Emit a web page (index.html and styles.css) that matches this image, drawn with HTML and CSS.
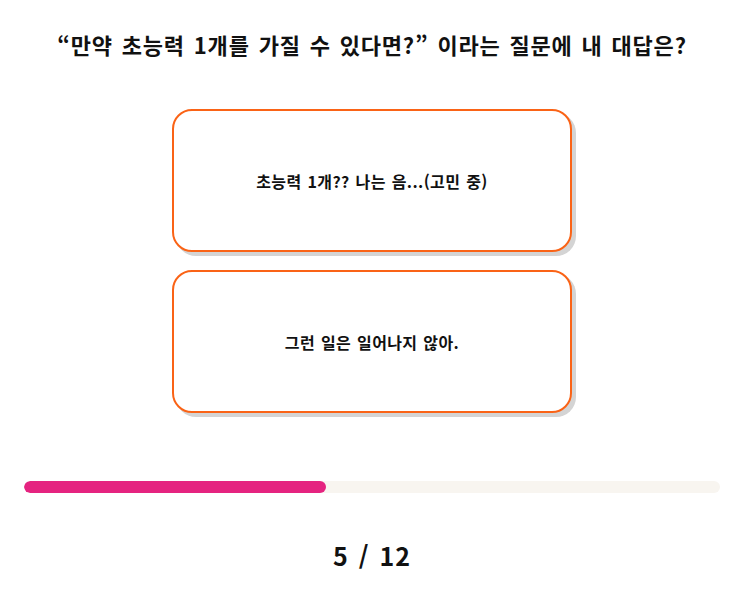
FILE: index.html
```
<!DOCTYPE html>
<html lang="ko">
<head>
<meta charset="utf-8">
<link rel="stylesheet" href="styles.css">
</head>
<body>
<main class="quiz">
  <h1 class="question">“만약 초능력 1개를 가질 수 있다면?” 이라는 질문에 내 대답은?</h1>
  <div class="answers">
    <button class="answer">초능력 1개?? 나는 음...(고민 중)</button>
    <button class="answer">그런 일은 일어나지 않아.</button>
  </div>
  <div class="progress"><div class="progress-fill" style="width: 43.4%"></div></div>
  <div class="counter">5 / 12</div>
</main>
</body>
</html>
```
FILE: styles.css
```
html, body {
  margin: 0;
  padding: 0;
  background: #ffffff;
}
body {
  font-family: "Noto Sans CJK KR", "Noto Sans", sans-serif;
  color: #111;
}
.quiz {
  padding: 28px 22px 0 24px;
  display: flex;
  flex-direction: column;
  align-items: center;
}
.question {
  margin: 0;
  font-size: 22px;
  font-weight: 700;
  line-height: 32px;
  letter-spacing: 0.8px;
  word-spacing: 2px;
  text-align: center;
  white-space: nowrap;
}
.answers {
  margin-top: 49px;
  display: flex;
  flex-direction: column;
  gap: 18px;
}
.answer {
  width: 400px;
  height: 143px;
  border: 2px solid #fa6316;
  border-radius: 20px;
  background: #fff;
  box-shadow: 4px 4px 0 #d4d4d4;
  font-family: inherit;
  font-size: 16px;
  font-weight: 700;
  letter-spacing: 0.4px;
  word-spacing: 1px;
  color: #111;
  padding: 0;
  cursor: pointer;
}
.progress {
  align-self: stretch;
  margin-top: 68px;
  height: 12px;
  border-radius: 6px;
  background: #f8f5f0;
  overflow: hidden;
}
.progress-fill {
  height: 100%;
  background: #e52380;
  border-radius: 6px;
}
.counter {
  margin-top: 44px;
  font-size: 25px;
  font-weight: 700;
  line-height: 36px;
  letter-spacing: 1px;
  word-spacing: 2px;
}
```
